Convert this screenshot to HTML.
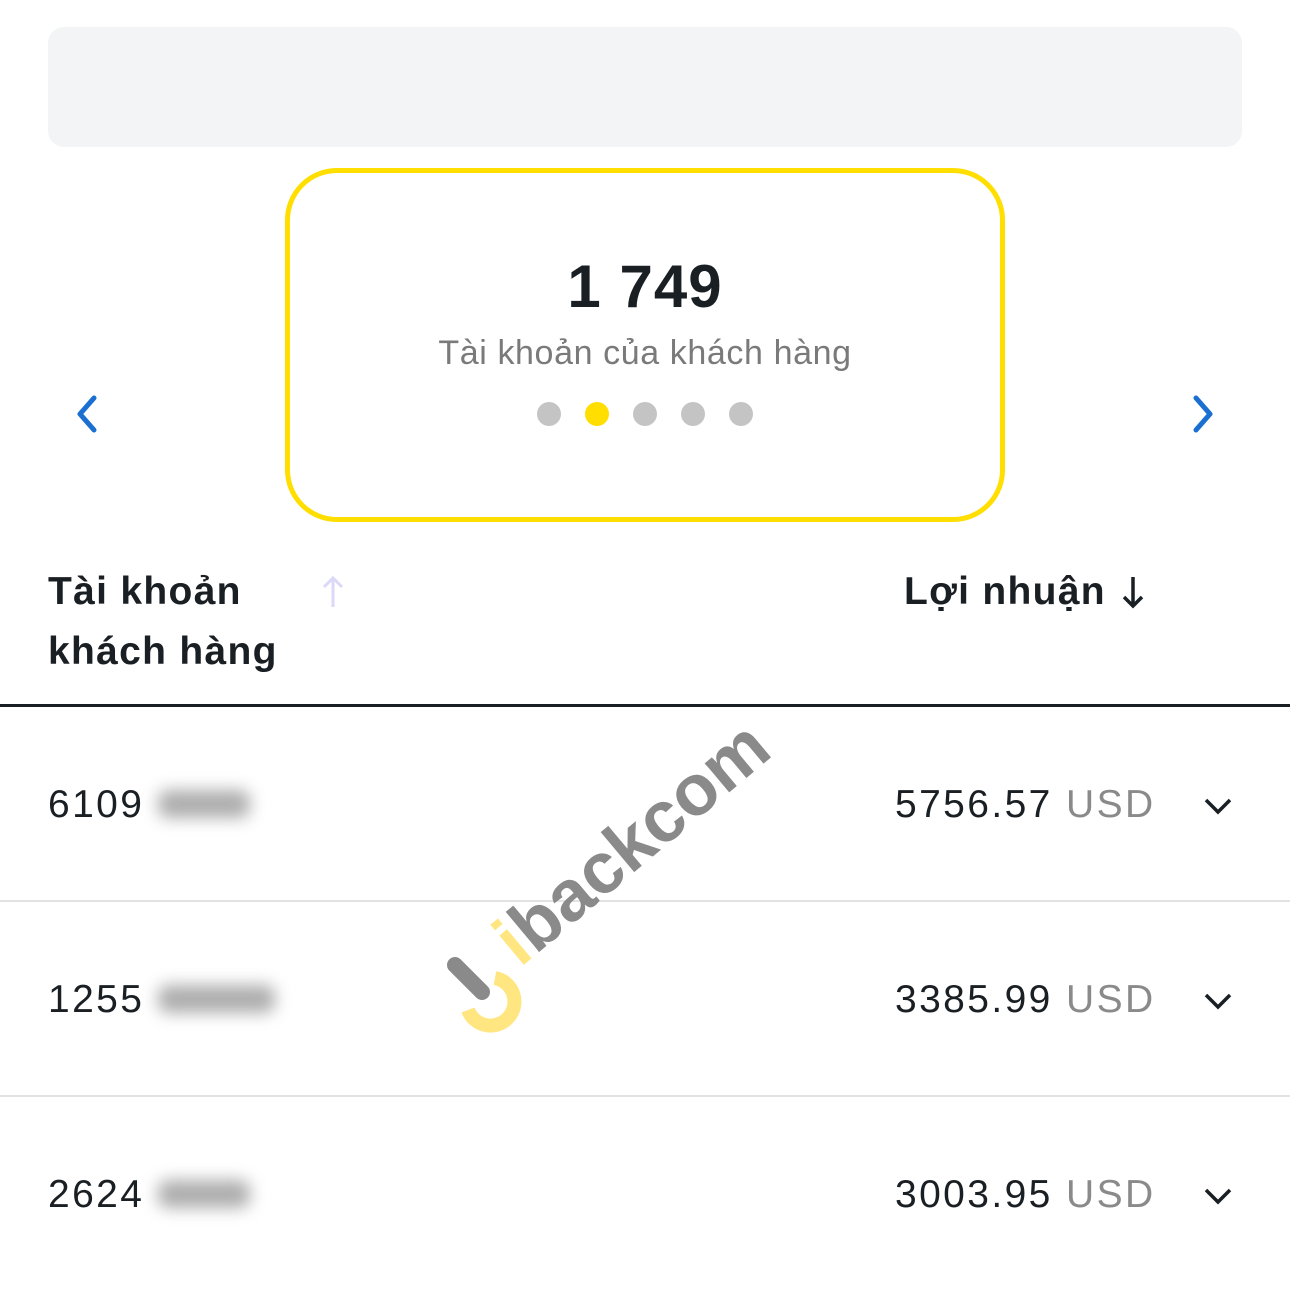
<!DOCTYPE html>
<html><head><meta charset="utf-8"><style>
body{margin:0;width:1290px;height:1290px;background:#fff;font-family:"Liberation Sans",sans-serif;position:relative;overflow:hidden;color:#1a1f24}
.a{position:absolute}
.top{left:48px;top:27px;width:1194px;height:120px;background:#f3f4f6;border-radius:16px}
.card{left:285px;top:168px;width:710px;height:344px;border:5px solid #ffde00;border-radius:52px}
.num{left:285px;width:720px;top:252px;text-align:center;font-size:60px;font-weight:bold;letter-spacing:1px}
.sub{left:285px;width:720px;top:334px;text-align:center;font-size:34px;color:#7a7a7a;letter-spacing:0.6px}
.dot{width:24px;height:24px;border-radius:50%;background:#c4c4c4;top:402px}
.h{font-size:39px;font-weight:bold;line-height:60px;letter-spacing:1.3px}
.row{font-size:39px;letter-spacing:2.4px}
.usd{color:#8a8a8a}
.sep{left:0;width:1290px;height:2px;background:#e2e2e2}
.blur{background:#999;filter:blur(8px);border-radius:10px;opacity:.8}
</style></head><body>
<div class="a top"></div>
<div class="a card"></div>
<div class="a num">1 749</div>
<div class="a sub">Tài khoản của khách hàng</div>
<div class="a dot" style="left:537px"></div>
<div class="a dot" style="left:585px;background:#ffde00"></div>
<div class="a dot" style="left:633px"></div>
<div class="a dot" style="left:681px"></div>
<div class="a dot" style="left:729px"></div>
<svg class="a" style="left:70px;top:394px" width="34" height="40"><path d="M24 4L10 20L24 36" stroke="#1a6fd1" stroke-width="5" fill="none" stroke-linecap="round" stroke-linejoin="round"/></svg>
<svg class="a" style="left:1186px;top:394px" width="34" height="40"><path d="M10 4L24 20L10 36" stroke="#1a6fd1" stroke-width="5" fill="none" stroke-linecap="round" stroke-linejoin="round"/></svg>
<div class="a h" style="left:48px;top:562px">Tài khoản<br>khách hàng</div>
<svg class="a" style="left:320px;top:574px" width="26" height="36"><path d="M13 33V4M4 13L13 4L22 13" stroke="#dcd8f8" stroke-width="3" fill="none"/></svg>
<div class="a h" style="left:904px;top:562px">Lợi nhuận</div>
<svg class="a" style="left:1120px;top:574px" width="26" height="36"><path d="M13 3V32M4 23L13 32L22 23" stroke="#1a1f24" stroke-width="3.5" fill="none"/></svg>
<div class="a" style="left:0;top:704px;width:1290px;height:3px;background:#1a1f24"></div>
<div class="a sep" style="top:900px"></div>
<div class="a sep" style="top:1095px"></div>
<div class="a row" style="left:48px;top:783px">6109</div>
<div class="a blur" style="left:158px;top:790px;width:92px;height:28px"></div>
<div class="a row" style="left:48px;top:978px">1255</div>
<div class="a blur" style="left:158px;top:985px;width:117px;height:28px"></div>
<div class="a row" style="left:48px;top:1173px">2624</div>
<div class="a blur" style="left:158px;top:1180px;width:92px;height:28px"></div>
<div class="a row" style="left:895px;top:783px">5756.57 <span class="usd">USD</span></div>
<div class="a row" style="left:895px;top:978px">3385.99 <span class="usd">USD</span></div>
<div class="a row" style="left:895px;top:1173px">3003.95 <span class="usd">USD</span></div>
<svg class="a" style="left:1202px;top:795px" width="32" height="22"><path d="M4 5L16 17L28 5" stroke="#1a1f24" stroke-width="3.5" fill="none"/></svg>
<svg class="a" style="left:1202px;top:990px" width="32" height="22"><path d="M4 5L16 17L28 5" stroke="#1a1f24" stroke-width="3.5" fill="none"/></svg>
<svg class="a" style="left:1202px;top:1185px" width="32" height="22"><path d="M4 5L16 17L28 5" stroke="#1a1f24" stroke-width="3.5" fill="none"/></svg>
<svg class="a" style="left:420px;top:720px" width="400" height="320">
<path d="M35 245L62 272" stroke="#8a8a8a" stroke-width="16" stroke-linecap="round"/>
<path d="M75 258A24 24 0 1 1 48 290" stroke="#ffe680" stroke-width="14" fill="none"/>
<text x="0" y="0" transform="translate(100,248) rotate(-40)" font-family="Liberation Sans" font-weight="bold" font-size="72" fill="#8a8a8a"><tspan fill="#ffe680">i</tspan>backcom</text>
</svg>
</body></html>
